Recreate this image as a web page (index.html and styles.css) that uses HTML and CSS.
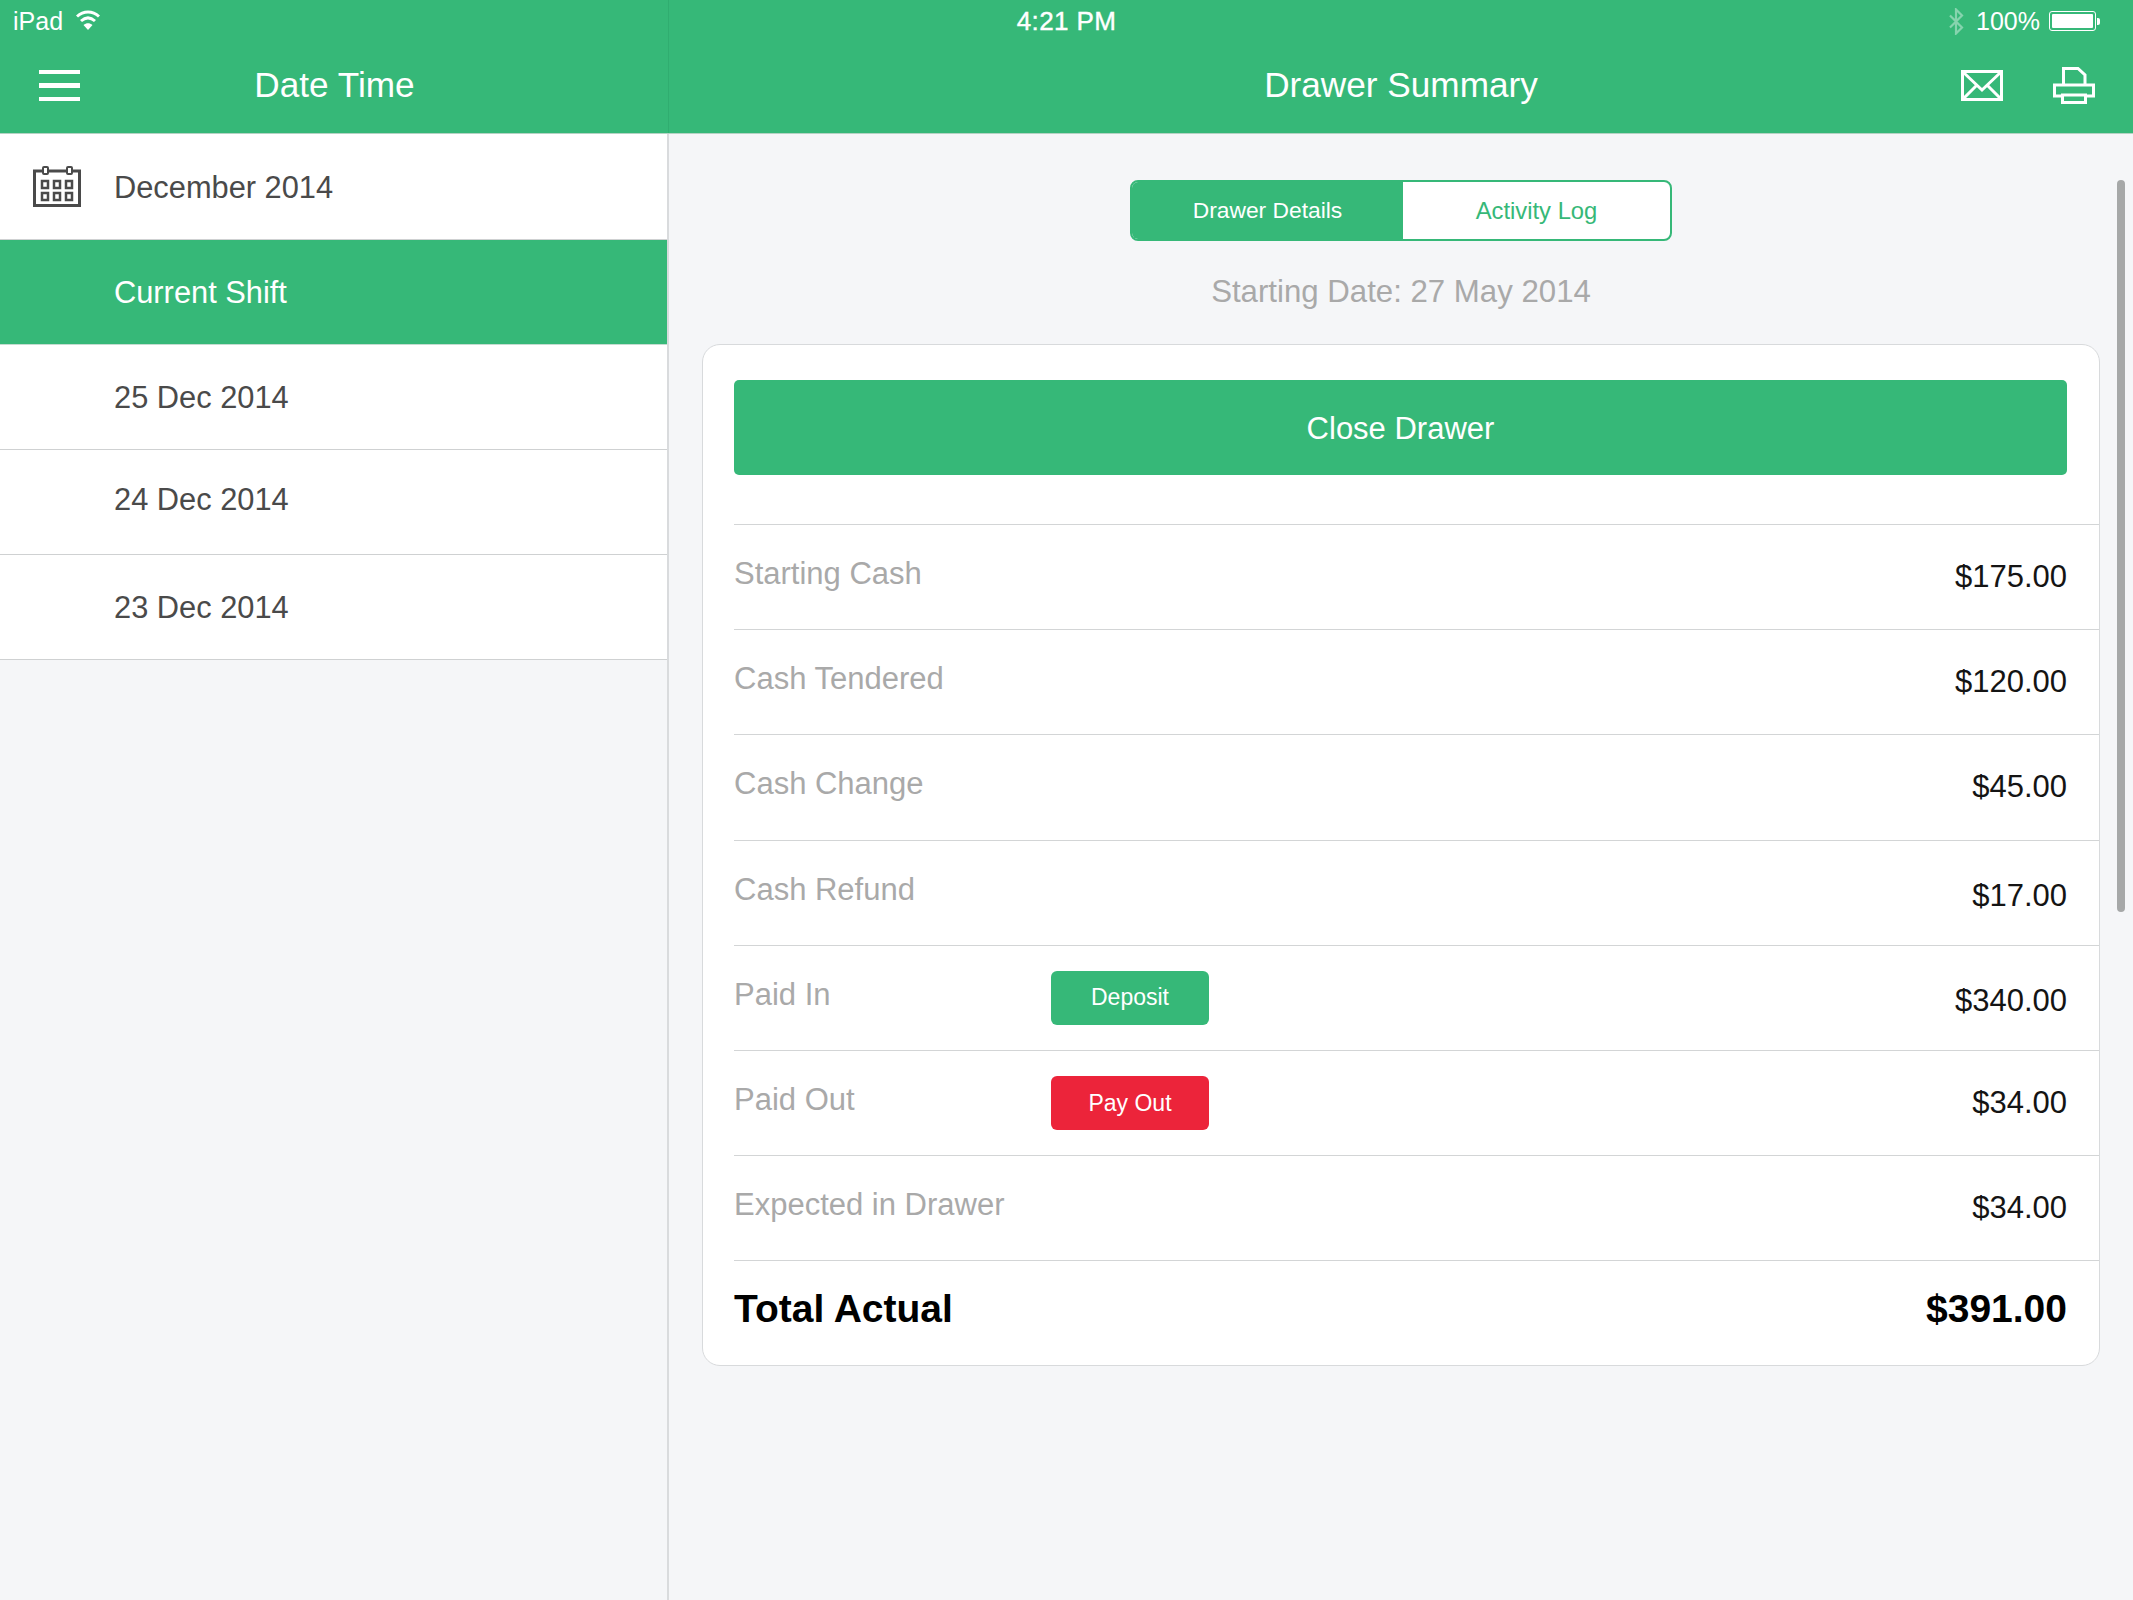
FILE: index.html
```html
<!DOCTYPE html>
<html lang="en">
<head>
<meta charset="utf-8">
<title>Drawer Summary</title>
<link rel="stylesheet" href="styles.css">
</head>
<body>
<div class="app">
  <header class="topbar">
    <div class="status">
      <div class="status-left">
        <span>iPad</span>
        <svg class="wifi" viewBox="0 0 24 20"><path d="M1 6.500C7.500 .5 16.500 .5 23 6.500" fill="none" stroke="#fff" stroke-width="3"/><path d="M5 11C9.500 7 14.500 7 19 11" fill="none" stroke="#fff" stroke-width="3"/><path d="M12 20L7.500 15C10.500 12.500 13.500 12.500 16.500 15Z" fill="#fff"/></svg>
      </div>
      <div class="status-time">4:21 PM</div>
      <div class="status-right">
        <svg class="bt" viewBox="0 0 16 27"><path d="M2 7.500L14 19.500L8 25.500V1.500L14 7.500L2 19.500" fill="none" stroke="#fff" stroke-width="2.200"/></svg>
        <span class="pct">100%</span>
        <span class="battery"><span class="battery-fill"></span></span>
        <span class="battery-nub"></span>
      </div>
    </div>
    <div class="nav">
      <div class="nav-left">
        <div class="nav-start">
          <svg class="burger" viewBox="0 0 41 31"><path d="M0 0H41V4H0ZM0 13H41V18H0ZM0 27H41V31H0Z" fill="#fff"/></svg>
        </div>
        <div class="nav-title">Date Time</div>
        <div></div>
      </div>
      <div class="nav-right">
        <div></div>
        <div class="nav-title">Drawer Summary</div>
        <div class="nav-actions">
          <svg class="mail" viewBox="0 0 42 31"><path d="M1.500 1.500H40.500V29.500H1.500Z" fill="none" stroke="#fff" stroke-width="3"/><path d="M2 2L21 20L40 2M2 29L16 15M40 29L26 15" fill="none" stroke="#fff" stroke-width="3"/></svg>
          <svg class="printer" viewBox="0 0 42 37"><path d="M10.500 18V1.500H25L32 8V18" fill="none" stroke="#fff" stroke-width="3"/><path d="M8 29H1.500V18H40.500V29H34" fill="none" stroke="#fff" stroke-width="3"/><path d="M9.500 28H32.500V35.500H9.500Z" fill="none" stroke="#fff" stroke-width="3"/></svg>
        </div>
      </div>
    </div>
  </header>
  <div class="body">
    <aside class="sidebar">
      <div class="side-row side-month">
        <svg class="calendar" viewBox="0 0 48 41"><path d="M1.500 5H46.500V39.500H1.500Z" fill="none" stroke="#4a4a4a" stroke-width="3"/><rect x="10" y="1" width="5" height="7" rx="1" fill="#fff" stroke="#4a4a4a" stroke-width="2"/><rect x="34" y="1" width="5" height="7" rx="1" fill="#fff" stroke="#4a4a4a" stroke-width="2"/><g fill="none" stroke="#4a4a4a" stroke-width="2.500"><rect x="9" y="15" width="6" height="7"/><rect x="21" y="15" width="6" height="7"/><rect x="33" y="15" width="6" height="7"/><rect x="9" y="27" width="6" height="7"/><rect x="21" y="27" width="6" height="7"/><rect x="33" y="27" width="6" height="7"/></g></svg>
        <span>December 2014</span>
      </div>
      <div class="side-row side-active"><span>Current Shift</span></div>
      <div class="side-row"><span>25 Dec 2014</span></div>
      <div class="side-row side-high"><span>24 Dec 2014</span></div>
      <div class="side-row"><span>23 Dec 2014</span></div>
    </aside>
    <main class="main">
      <div class="scrollbar"></div>
      <div class="segment">
        <div class="seg seg-on">Drawer Details</div>
        <div class="seg">Activity Log</div>
      </div>
      <div class="start-date">Starting Date: 27 May 2014</div>
      <section class="card">
        <div class="close-wrap"><div class="close-btn">Close Drawer</div></div>
        <div class="row"><span class="label">Starting Cash</span><span class="value">$175.00</span></div>
        <div class="row"><span class="label">Cash Tendered</span><span class="value">$120.00</span></div>
        <div class="row"><span class="label">Cash Change</span><span class="value">$45.00</span></div>
        <div class="row"><span class="label">Cash Refund</span><span class="value value-low">$17.00</span></div>
        <div class="row"><span class="label">Paid In</span><span class="pill pill-green">Deposit</span><span class="value value-low">$340.00</span></div>
        <div class="row"><span class="label">Paid Out</span><span class="pill pill-red">Pay Out</span><span class="value">$34.00</span></div>
        <div class="row"><span class="label">Expected in Drawer</span><span class="value">$34.00</span></div>
        <div class="row row-total"><span>Total Actual</span><span>$391.00</span></div>
      </section>
    </main>
  </div>
</div>
</body>
</html>
```
FILE: styles.css
```css
* { box-sizing: border-box; }
html, body { margin: 0; padding: 0; }
body { font-family: "Liberation Sans", Arial, sans-serif; background: #f5f6f8; }
.app { width: 2133px; height: 1600px; display: flex; flex-direction: column; overflow: hidden; }

.topbar {
  height: 134px;
  flex: none;
  color: #fff;
  border-bottom: 1px solid #b5d3c4;
  background: linear-gradient(#30ad70, #30ad70) 668px 0 / 1px 100% no-repeat, #36b878;
  display: flex;
  flex-direction: column;
}
.status {
  height: 42px;
  display: grid;
  grid-template-columns: 1fr auto 1fr;
  align-items: center;
  font-size: 25px;
}
.status-left { display: flex; align-items: center; gap: 13px; padding-left: 13px; }
.wifi { width: 24px; height: 20px; margin-top: -2px; }
.status-time { font-size: 26px; letter-spacing: .4px; -webkit-text-stroke: .4px #fff; }
.status-right { display: flex; justify-content: flex-end; align-items: center; padding-right: 33px; }
.bt { width: 16px; height: 27px; opacity: .4; margin-right: 12px; }
.pct { margin-right: 9px; }
.battery { width: 47px; height: 20px; border: 1px solid #fff; border-radius: 3px; padding: 2px; display: flex; }
.battery-fill { flex: 1; background: #fff; border-radius: 1px; }
.battery-nub { width: 3px; height: 7px; background: #fff; border-radius: 0 2px 2px 0; margin-left: 1px; }

.nav { flex: 1; display: grid; grid-template-columns: 669px 1fr; }
.nav-left, .nav-right { display: grid; grid-template-columns: 1fr auto 1fr; align-items: center; padding-bottom: 5px; }
.nav-title { font-size: 35.2px; white-space: nowrap; }
.nav-start { padding-left: 39px; display: flex; }
.burger { width: 41px; height: 31px; }
.nav-actions { display: flex; justify-content: flex-end; align-items: center; gap: 50px; padding-right: 38px; }
.mail { width: 42px; height: 31px; }
.printer { width: 42px; height: 37px; }

.body { flex: 1; display: flex; min-height: 0; }
.sidebar { width: 669px; flex: none; border-right: 2px solid #d9dbdd; }
.side-row {
  height: 105px;
  background: #fff;
  border-bottom: 1px solid #cfd1d2;
  display: flex;
  align-items: center;
  padding: 2px 0 0 114px;
  font-size: 30.8px;
  color: #4a4a4a;
}
.side-month { height: 106px; padding-left: 33px; gap: 33px; }
.calendar { width: 48px; height: 41px; margin-top: -2px; }
.side-active { background: #36b878; color: #fff; border-bottom-color: #c4dcd0; }
.side-high span { transform: translateY(-3px); }

.main { flex: 1; position: relative; display: flex; flex-direction: column; align-items: center; padding-top: 46px; }
.scrollbar { position: absolute; left: 1448px; top: 46px; width: 8px; height: 732px; border-radius: 4px; background: #a6a8a8; }
.segment { width: 542px; height: 61px; display: flex; border: 2px solid #36b878; border-radius: 8px; overflow: hidden; background: #fff; }
.seg { flex: 1; display: flex; align-items: center; justify-content: center; font-size: 23.800px; color: #36b878; }
.seg-on { background: #36b878; color: #fff; flex: none; width: 271px; font-size: 22.800px; }
.start-date { margin-top: 32px; height: 38px; line-height: 38px; font-size: 31.200px; color: #a9a9a9; }
.card {
  margin-top: 33px;
  width: 1398px;
  height: 1022px;
  background: #fff;
  border: 1px solid #d8dadc;
  border-radius: 18px;
  padding-left: 31px;
  display: flex;
  flex-direction: column;
}
.close-wrap { height: 179px; flex: none; padding: 35px 32px 0 0; }
.close-btn {
  height: 95px;
  background: #36b878;
  border-radius: 5px;
  color: #fff;
  font-size: 31px;
  display: flex;
  align-items: center;
  justify-content: center;
  padding-top: 2px;
}
.row {
  height: 105.200px;
  flex: none;
  border-top: 1px solid #d3d5d6;
  display: flex;
  align-items: center;
  padding-right: 32px;
  font-size: 31px;
}
.label { color: #a9a9a9; width: 317px; flex: none; transform: translateY(-3px); }
.value { color: #141414; margin-left: auto; }
.value-low { transform: translateY(3px); }
.pill { width: 158px; height: 54px; border-radius: 6px; color: #fff; font-size: 23px; display: flex; align-items: center; justify-content: center; }
.pill-green { background: #36b878; }
.pill-red { background: #ec243a; }
.row-total { flex: 1; justify-content: space-between; font-weight: 700; font-size: 39px; color: #000; padding-bottom: 8px; }
```
